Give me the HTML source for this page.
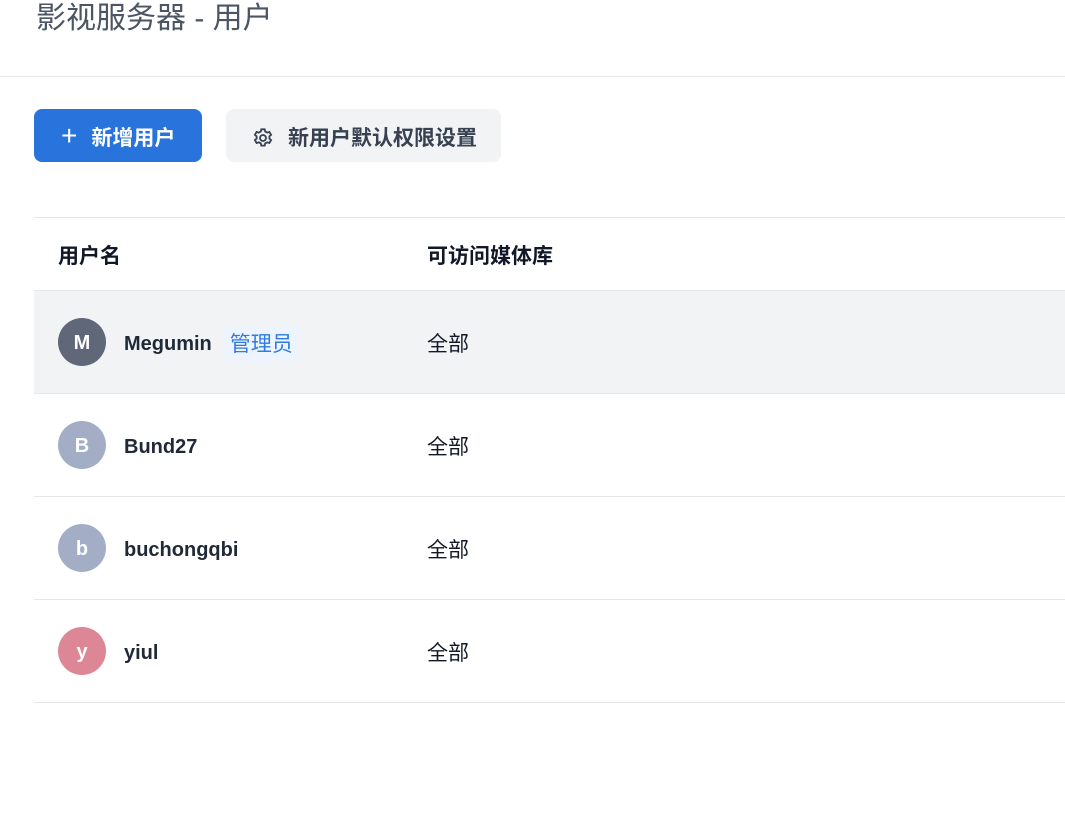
<!DOCTYPE html>
<html><head><meta charset="utf-8"><style>
*{margin:0;padding:0;box-sizing:border-box}
body{width:1065px;height:825px;background:#fff;font-family:"Liberation Sans","Noto Sans CJK SC",sans-serif;position:relative;overflow:hidden;color:#1f2937}
.title{position:absolute;left:36px;top:-1px;font-size:30px;color:#4b5563;line-height:40px}
.hr{position:absolute;left:0;right:0;top:76px;height:1px;background:#e5e7eb}
.btn{position:absolute;top:109px;height:53px;border-radius:8px;font-weight:bold;font-size:21px;display:flex;align-items:center;line-height:53px;padding-top:5px}
.b1{left:34px;width:168px;background:#2874dc;color:#fff;padding-left:27px}
.b2{left:226px;width:275px;background:#f2f3f5;color:#374151;padding-left:25px}
.b2 svg{position:relative;top:0px}
.tbl{position:absolute;left:34px;right:0;top:217px;border-top:1px solid #e5e7eb}
.row{height:103px;border-bottom:1px solid #e5e7eb;position:relative}
.head{height:73px;font-weight:bold;font-size:21px;color:#111827}
.head .c1,.head .c2{top:15px}
.c1{position:absolute;left:24px;top:27px;height:48px;display:flex;align-items:center;line-height:48px}
.c2{position:absolute;left:393px;top:30px;line-height:48px;font-size:21px;color:#111827}
.av{width:48px;height:48px;border-radius:50%;color:#fff;font-weight:bold;font-size:20px;text-align:center;line-height:45px;padding-top:3px;margin-right:18px}
.nm{font-size:20px;font-weight:bold;color:#1f2937;position:relative;top:2px}
.tag{margin-left:12px;background:#eef4fd;color:#2f7be6;font-size:21px;padding:3px 6px 0;border-radius:4px;line-height:34px;position:relative;top:1px}
</style></head><body>
<div class="title">影视服务器 - 用户</div>
<div class="hr"></div>
<div class="btn b1"><span style="font-weight:normal;font-size:28px;margin-right:14px;position:relative;top:-3px">+</span>新增用户</div>
<div class="btn b2"><svg width="24" height="24" viewBox="0 0 24 24" fill="none" stroke="#374151" stroke-width="1.8" style="margin-right:13px"><circle cx="12" cy="12" r="3"/><path d="M10.3 3.3l-.5 2.2-2 1.1-2.2-.7-1.7 2.9 1.7 1.5v2.3l-1.7 1.5 1.7 2.9 2.2-.7 2 1.1.5 2.2h3.4l.5-2.2 2-1.1 2.2.7 1.7-2.9-1.7-1.5v-2.3l1.7-1.5-1.7-2.9-2.2.7-2-1.1-.5-2.2z"/></svg>新用户默认权限设置</div>
<div class="tbl">
<div class="row head"><div class="c1">用户名</div><div class="c2" style="font-weight:bold">可访问媒体库</div></div>
<div class="row" style="background:#f2f3f5"><div class="c1"><div class="av" style="background:#5f6779">M</div><span class="nm">Megumin</span><span class="tag">管理员</span></div><div class="c2">全部</div></div>
<div class="row"><div class="c1"><div class="av" style="background:#a3adc6">B</div><span class="nm">Bund27</span></div><div class="c2">全部</div></div>
<div class="row"><div class="c1"><div class="av" style="background:#a3adc6">b</div><span class="nm">buchongqbi</span></div><div class="c2">全部</div></div>
<div class="row"><div class="c1"><div class="av" style="background:#dd8796">y</div><span class="nm">yiul</span></div><div class="c2">全部</div></div>
</div>
</body></html>
